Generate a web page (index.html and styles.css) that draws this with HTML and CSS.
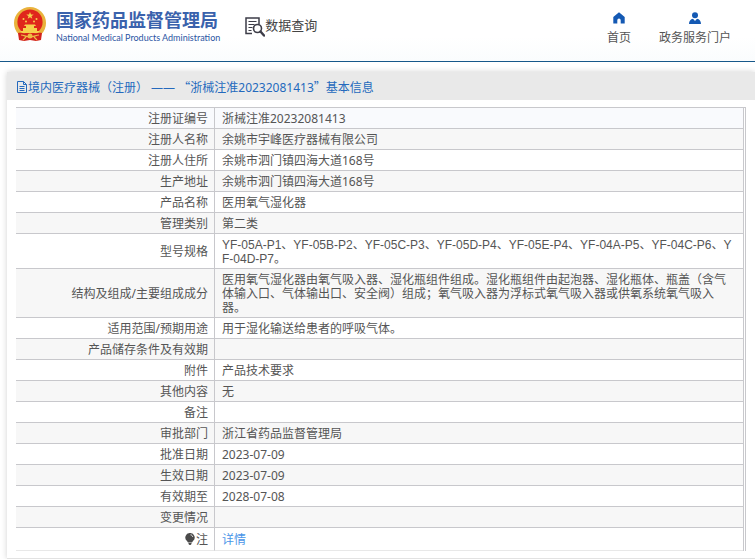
FILE: index.html
```
<!DOCTYPE html>
<html lang="zh-CN">
<head>
<meta charset="utf-8">
<title>数据查询</title>
<link rel="stylesheet" href="styles.css">
</head>
<body>
<header class="header">
  <a class="brand" href="#">
    <svg class="emblem" viewBox="0 0 32 36" aria-hidden="true">
      <path d="M5 25 5 33 10 34 16 33 22 34 27 33 27 25Z" fill="#d3231c"/>
      <circle cx="16" cy="16" r="16" fill="#e9b33c"/>
      <circle cx="16" cy="15" r="12.600" fill="#e0261c"/>
      <path d="M16 5l1 2.600h2.700l-2.200 1.600.8 2.600-2.300-1.600-2.300 1.600.8-2.600-2.200-1.600H15z" fill="#f6d04c"/>
      <g fill="#f6d04c"><circle cx="9.500" cy="12" r="1"/><circle cx="12" cy="14.500" r="1"/><circle cx="20" cy="14.500" r="1"/><circle cx="22.500" cy="12" r="1"/>
      <path d="M11 17.500h10l1 1.500H10zM12 19h8v2h3v3H9v-3h3zM6 24h20l-2 2H8z"/></g>
      <path d="M4 26c4-1 8 1 12 1s8-2 12-1l-1 7-5-2-3 2-3-1-3 1-3-2-5 2z" fill="#d3231c"/>
      <path d="M7 28c3 0 5 2 9 2s6-2 9-2M9 33l3-3M23 33l-3-3" fill="none" stroke="#efbd45" stroke-width="1.200"/>
      <circle cx="16" cy="29" r="2.500" fill="#efbd45"/>
    </svg>
    <span class="brand-text">
      <span class="brand-cn">国家药品监督管理局</span>
      <span class="brand-en">National Medical Products Administration</span>
    </span>
  </a>
  <a class="search" href="#">
    <svg class="search-icon" viewBox="0 0 20 20" aria-hidden="true">
      <path d="M7 16.500H1V1h13v6" fill="none" stroke="#3d3d48" stroke-width="1.500"/>
      <path d="M3.500 4.500h8M3.500 7.500h6M3.500 10.500h4M3.500 13.500h3" stroke="#3d3d48" stroke-width="1.200"/>
      <circle cx="12.500" cy="11.500" r="4" fill="#fff" stroke="#3d3d48" stroke-width="1.600"/>
      <path d="M15.500 14.500 19 18.500" stroke="#3d3d48" stroke-width="2.400" stroke-linecap="round"/>
    </svg>
    <span>数据查询</span>
  </a>
  <nav class="nav">
    <a class="nav-link" href="#">
      <svg class="nav-icon" viewBox="0 0 12 12" aria-hidden="true"><path d="M6 0.300 0.300 5v6.500h4V8.200a1.700 1.700 0 0 1 3.400 0v3.300h4V5z" fill="#1459b3"/></svg>
      首页
    </a>
    <a class="nav-link" href="#">
      <svg class="nav-icon" viewBox="0 0 12 12" aria-hidden="true"><circle cx="6" cy="3.200" r="3" fill="#1459b3"/><path d="M0 12c0-3 1.500-5 4-5.300L6 9l2-2.300c2.500.3 4 2.300 4 5.300z" fill="#1459b3"/></svg>
      政务服务门户
    </a>
  </nav>
</header>
<main class="card">
  <h1 class="card-title">
    <svg class="doc-icon" viewBox="0 0 10 12" aria-hidden="true"><path d="M.5.500h6l3 3v8h-9zM6.500.500v3h3M2.500 5.500h5M2.500 7.500h5M2.500 9.500h5" fill="none" stroke="#2469bd"/></svg><span>境内医疗器械（注册） —— <span class="quote">“</span>浙械注准20232081413<span class="quote">”</span>基本信息</span>
  </h1>
  <div class="table-frame">
    <table class="info">
      <tbody>
        <tr><th scope="row">注册证编号</th><td>浙械注准20232081413</td></tr>
        <tr><th scope="row">注册人名称</th><td>余姚市宇峰医疗器械有限公司</td></tr>
        <tr><th scope="row">注册人住所</th><td>余姚市泗门镇四海大道168号</td></tr>
        <tr><th scope="row">生产地址</th><td>余姚市泗门镇四海大道168号</td></tr>
        <tr><th scope="row">产品名称</th><td>医用氧气湿化器</td></tr>
        <tr><th scope="row">管理类别</th><td>第二类</td></tr>
        <tr><th scope="row">型号规格</th><td class="models">YF-05A-P1、YF-05B-P2、YF-05C-P3、YF-05D-P4、YF-05E-P4、YF-04A-P5、YF-04C-P6、Y<br>F-04D-P7。</td></tr>
        <tr><th scope="row">结构及组成/主要组成成分</th><td>医用氧气湿化器由氧气吸入器、湿化瓶组件组成。湿化瓶组件由起泡器、湿化瓶体、瓶盖（含气体输入口、气体输出口、安全阀）组成；氧气吸入器为浮标式氧气吸入器或供氧系统氧气吸入器。</td></tr>
        <tr><th scope="row">适用范围/预期用途</th><td>用于湿化输送给患者的呼吸气体。</td></tr>
        <tr><th scope="row">产品储存条件及有效期</th><td></td></tr>
        <tr><th scope="row">附件</th><td>产品技术要求</td></tr>
        <tr><th scope="row">其他内容</th><td>无</td></tr>
        <tr><th scope="row">备注</th><td></td></tr>
        <tr><th scope="row">审批部门</th><td>浙江省药品监督管理局</td></tr>
        <tr><th scope="row">批准日期</th><td>2023-07-09</td></tr>
        <tr><th scope="row">生效日期</th><td>2023-07-09</td></tr>
        <tr><th scope="row">有效期至</th><td>2028-07-08</td></tr>
        <tr><th scope="row">变更情况</th><td></td></tr>
        <tr class="note"><th scope="row"><svg class="bulb" viewBox="0 0 10 12" aria-hidden="true"><path d="M5 0a4.500 4.500 0 0 0-3 8l1 1.500h4L8 8a4.500 4.500 0 0 0-3-8zM3.500 10h3v1l-1 1h-1l-1-1z" fill="#4a4a4a"/><path d="M5.500 1.800c1.300.1 2 .9 2.200 2.200" fill="none" stroke="#fff" stroke-width=".8"/></svg>注</th><td><a class="detail" href="#">详情</a></td></tr>
      </tbody>
    </table>
  </div>
</main>
</body>
</html>
```
FILE: styles.css
```
* { box-sizing: border-box; }
body {
  margin: 0;
  background: #fff;
  color: #555;
  font-family: "Noto Sans", "Noto Sans CJK SC", sans-serif;
  font-size: 12px;
  line-height: 14px;
}
a { color: inherit; text-decoration: none; }
svg { display: block; flex: none; }
.header {
  display: flex;
  align-items: flex-start;
  height: 62px;
  padding: 0 24px 0 14px;
  border-bottom: 1px solid #17588a;
  background: linear-gradient(#fff 60%, #fafcfd);
}
.brand { display: flex; gap: 10px; padding-top: 7px; }
.emblem { width: 32px; height: 36px; }
.brand-text { display: flex; flex-direction: column; padding-top: 2px; color: #3a62ac; white-space: nowrap; }
.brand-cn { font-size: 18px; font-weight: 700; line-height: 22px; }
.brand-en { color: #2b55a3; font-family: Lato, sans-serif; font-size: 9px; font-weight: 400; line-height: 13px; }
.search {
  display: flex;
  align-items: center;
  margin: 13px 0 0 25px;
  color: #444;
  font-size: 13px;
  line-height: 20px;
}
.search-icon { width: 20px; height: 20px; margin-top: 4px; }
.nav { display: flex; gap: 28px; margin: 12px 0 0 auto; }
.nav-link { display: flex; flex-direction: column; align-items: center; gap: 5px; line-height: 18px; }
.nav-icon { width: 12px; height: 12px; }
.card {
  margin: 10px 0 0 7px;
  padding-bottom: 7px;
  border-bottom: 1px solid #e2e2e2;
  box-shadow: 0 0 6px rgba(0, 0, 0, .18);
}
.card-title {
  display: flex;
  align-items: center;
  height: 28px;
  margin: 0;
  padding: 2px 10px 0;
  background: #e9e9e9;
  color: #2469bd;
  font-size: 12px;
  font-weight: 400;
}
.quote { font-family: "Noto Sans CJK SC", sans-serif; }
.doc-icon { width: 10px; height: 12px; margin-right: 1px; }
.table-frame {
  margin: 7px 9px 0;
  border-top: 1px solid #c8c8cc;
  border-right: 1px solid #c8c8cc;
  padding-right: 1px;
}
.info {
  width: 100%;
  border-collapse: separate;
  border-spacing: 0;
  border-right: 1px solid #c8c8cc;
  table-layout: fixed;
}
th, td { padding: 4px 6px 2px; border-bottom: 1px solid #c8c8cc; font-weight: 400; height: 21px; }
th { width: 199px; border-right: 1px solid #c8c8cc; text-align: right; }
td { padding-left: 7px; padding-right: 8px; text-align: left; word-break: break-all; }
.models { padding-right: 2px; font-family: "Liberation Sans", "Noto Sans CJK SC", sans-serif; }
tr:nth-child(even) { background: #f7f7f7; }
tr:first-child { background: #f9fafd; }
.note th, .note td { height: 23px; border-bottom-color: #e8e8e8; }
.bulb { display: inline-block; width: 10px; height: 12px; margin-right: 1px; vertical-align: -1px; }
.detail { color: #4a95e8; }
```
